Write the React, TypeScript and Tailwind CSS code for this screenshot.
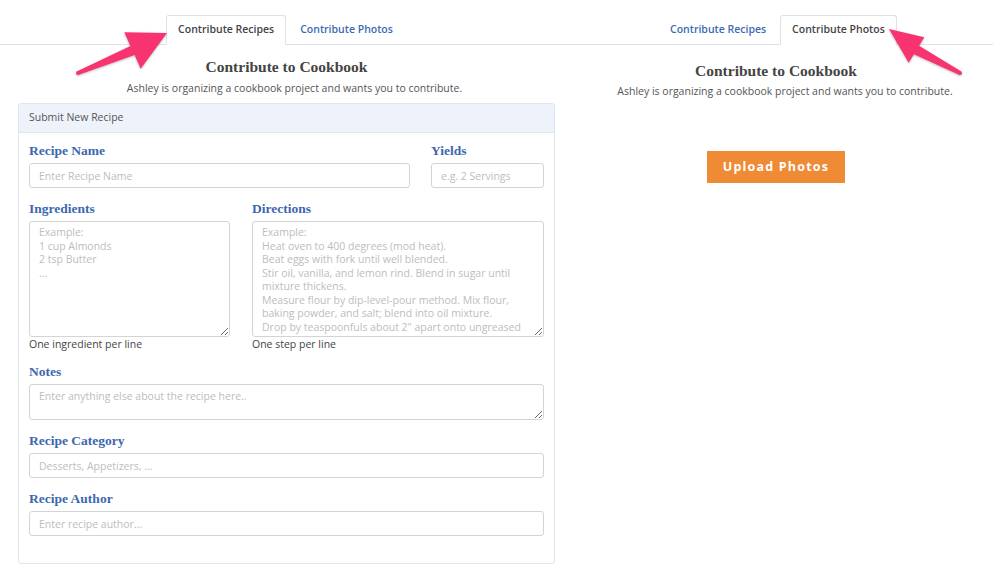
import React from "react";

const body = { fontFamily: "'Open Sans', 'Noto Sans', sans-serif" };
const slab = { fontFamily: "'Liberation Serif', 'DejaVu Serif', serif" };

function Tabs({ active }: { active: "recipes" | "photos" }) {
  const on =
    "h-[30px] px-[11px] flex items-center border border-[#dee2e6] border-b-white bg-white rounded-t-[3px] -mb-px text-[#444] text-[10.5px] font-semibold";
  const off =
    "h-[30px] px-[13px] flex items-center border border-transparent -mb-px text-[#3c6ab3] text-[10.5px] font-semibold";
  return (
    <div className="flex" style={body}>
      <div className={active === "recipes" ? on : off}>Contribute Recipes</div>
      <div className={active === "photos" ? on : off}>Contribute Photos</div>
    </div>
  );
}

function Label({ children }: { children: React.ReactNode }) {
  return (
    <div className="text-[13.5px] leading-[16px] font-bold text-[#3b68b0] mb-[4px]" style={slab}>
      {children}
    </div>
  );
}

const field =
  "block w-full border border-[#d4d4d4] rounded-[3px] bg-white px-[9px] text-[10.5px] text-[#444] placeholder:text-[#bdbdbd] outline-none";

const ingredients = "Example:\n1 cup Almonds\n2 tsp Butter\n...";
const directions =
  "Example:\nHeat oven to 400 degrees (mod heat).\nBeat eggs with fork until well blended.\nStir oil, vanilla, and lemon rind. Blend in sugar until\nmixture thickens.\nMeasure flour by dip-level-pour method. Mix flour,\nbaking powder, and salt; blend into oil mixture.\nDrop by teaspoonfuls about 2\" apart onto ungreased\nbaking sheet.";

function Arrows() {
  return (
    <svg
      className="absolute inset-0 pointer-events-none drop-shadow-[0_1px_1px_rgba(0,0,0,0.25)]"
      width="993"
      height="571"
      viewBox="0 0 993 571"
    >
      <polygon
        fill="#f7346f"
        points="167,33 124.3,32.3 130.4,45.9 77.2,71.2 78.8,74.8 134.6,55.1 140.7,68.7"
      />
      <circle cx="78" cy="73" r="2" fill="#f7346f" />
      <polygon
        fill="#f7346f"
        points="889,29 924.3,37.2 919.1,45.7 961,71.3 959,74.7 913.9,54.3 908.7,62.8"
      />
      <circle cx="960" cy="73" r="2" fill="#f7346f" />
    </svg>
  );
}

export default function App() {
  return (
    <div className="relative flex w-[993px] h-[571px] bg-white overflow-hidden" style={body}>
      {/* recipe form column */}
      <div className="w-[573px] flex flex-col">
        <div className="pt-[15px] border-b border-[#dee2e6] flex justify-center">
          <Tabs active="recipes" />
        </div>
        <h1 className="mt-[12px] text-center text-[15.5px] leading-[20px] font-bold text-[#444]" style={slab}>
          Contribute to Cookbook
        </h1>
        <p className="mt-[4px] pl-[16px] text-center text-[10.5px] leading-[15px] text-[#555]">
          Ashley is organizing a cookbook project and wants you to contribute.
        </p>
        <div className="mt-[7px] mx-[18px] border border-[#dfe5ee] rounded-[3px] h-[461px] flex flex-col">
          <div className="h-[29px] bg-[#eef3fb] border-b border-[#dfe5ee] px-[10px] flex items-center text-[10.5px] text-[#555]">
            Submit New Recipe
          </div>
          <div className="px-[10px] pt-[10px]">
            <div className="flex gap-[21px] mb-[13px]">
              <div className="w-[381px]">
                <Label>Recipe Name</Label>
                <input className={`${field} h-[25px]`} placeholder="Enter Recipe Name" />
              </div>
              <div className="flex-1">
                <Label>Yields</Label>
                <input className={`${field} h-[25px]`} placeholder="e.g. 2 Servings" />
              </div>
            </div>
            <div className="flex gap-[22px] mb-[13px]">
              <div className="w-[201px]">
                <Label>Ingredients</Label>
                <textarea
                  className={`${field} h-[116px] py-[4px] leading-[13.5px] overflow-hidden`}
                  placeholder={ingredients}
                />
                <div className="mt-[1px] text-[10.5px] leading-[13px] text-[#444]">One ingredient per line</div>
              </div>
              <div className="flex-1">
                <Label>Directions</Label>
                <textarea
                  className={`${field} h-[116px] py-[4px] leading-[13.5px] overflow-hidden whitespace-pre`}
                  placeholder={directions}
                />
                <div className="mt-[1px] text-[10.5px] leading-[13px] text-[#444]">One step per line</div>
              </div>
            </div>
            <div className="mb-[13px]">
              <Label>Notes</Label>
              <textarea
                className={`${field} h-[36px] py-[5px] leading-[13.5px] overflow-hidden`}
                placeholder="Enter anything else about the recipe here.."
              />
            </div>
            <div className="mb-[13px]">
              <Label>Recipe Category</Label>
              <input className={`${field} h-[25px]`} placeholder="Desserts, Appetizers, ..." />
            </div>
            <div>
              <Label>Recipe Author</Label>
              <input className={`${field} h-[25px]`} placeholder="Enter recipe author..." />
            </div>
          </div>
        </div>
      </div>

      {/* photo upload column */}
      <div className="flex-1 flex flex-col">
        <div className="pt-[15px] border-b border-[#dee2e6] flex pl-[83px]">
          <Tabs active="photos" />
        </div>
        <h1 className="mt-[16px] pr-[14px] text-center text-[15.5px] leading-[20px] font-bold text-[#444]" style={slab}>
          Contribute to Cookbook
        </h1>
        <p className="mt-[3px] pl-[4px] text-center text-[10.5px] leading-[15px] text-[#555]">
          Ashley is organizing a cookbook project and wants you to contribute.
        </p>
        <div className="mt-[52px] flex pl-[134px]">
          <button className="w-[138px] h-[32px] bg-[#ef8a35] text-white text-[12.5px] font-bold tracking-[1.2px]">
            Upload Photos
          </button>
        </div>
      </div>

      <Arrows />
    </div>
  );
}
